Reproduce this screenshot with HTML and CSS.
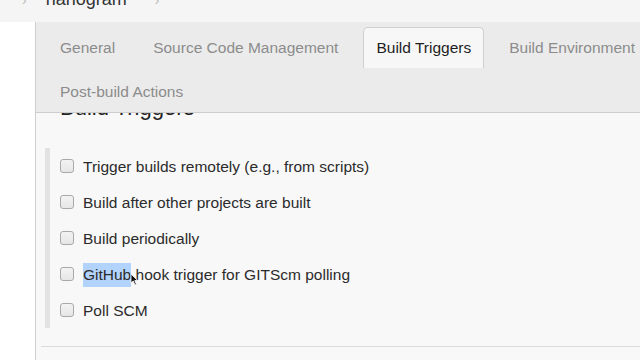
FILE: index.html
```html
<!DOCTYPE html>
<html>
<head>
<meta charset="utf-8">
<link rel="stylesheet" href="styles.css">
</head>
<body>
<div class="topbar">
  <div class="crumbs">
    <span class="chev">›</span>
    <span class="crumb">nanogram</span>
    <span class="chev">›</span>
  </div>
</div>
<div class="main">
  <div class="gutter"></div>
  <div class="panel">
    <div class="tabs">
      <div class="tabrow">
        <div class="tab">General</div>
        <div class="tab">Source Code Management</div>
        <div class="tab active">Build Triggers</div>
        <div class="tab">Build Environment</div>
      </div>
      <div class="tabrow">
        <div class="tab">Post-build Actions</div>
      </div>
    </div>
    <div class="content">
      <h2 class="heading">Build Triggers</h2>
      <div class="section">
        <label class="row"><span class="box"></span><span class="label">Trigger builds remotely (e.g., from scripts)</span></label>
        <label class="row"><span class="box"></span><span class="label">Build after other projects are built</span></label>
        <label class="row"><span class="box"></span><span class="label">Build periodically</span></label>
        <label class="row"><span class="box"></span><span class="label"><span class="sel">GitHub</span> hook trigger for GITScm polling</span>
          <svg class="cursor" width="9" height="13" viewBox="0 0 9 13"><path d="M1 1 L1 10 L3.2 8 L5 12 L6.4 11.3 L4.7 7.6 L7.6 7.4 Z" fill="#111" stroke="#fff" stroke-width="0.8"/></svg>
        </label>
        <label class="row"><span class="box"></span><span class="label">Poll SCM</span></label>
      </div>
      <div class="sep"></div>
    </div>
  </div>
</div>
</body>
</html>
```

FILE: styles.css
```css
html, body {
  margin: 0;
  padding: 0;
  background: #ffffff;
  font-family: "Liberation Sans", Arial, sans-serif;
  color: #333;
}
.topbar {
  height: 22px;
  background: #f5f5f5;
  overflow: hidden;
}
.crumbs {
  display: flex;
  align-items: baseline;
  margin-top: -12px;
  padding-left: 22px;
  font-size: 18px;
  line-height: 22px;
}
.chev {
  color: #bbb;
  font-size: 14px;
}
.crumb {
  color: #333;
  margin: 0 28px 0 19px;
}
.main {
  display: flex;
  height: 338px;
}
.gutter {
  width: 35px;
  background: #fff;
  border-right: 1px solid #cfcfcf;
}
.panel {
  flex: 1;
  min-width: 0;
  display: flex;
  flex-direction: column;
  background: #f8f8f8;
}
.tabs {
  display: flex;
  flex-direction: column;
  gap: 3px;
  padding: 5px 0 0 11px;
  background: #ebebeb;
  border-bottom: 1px solid #cdcdcd;
  height: 85px;
  overflow: hidden;
}
.tabrow {
  display: flex;
  gap: 12px;
  white-space: nowrap;
}
.tab {
  height: 41px;
  line-height: 41px;
  padding: 0 13px;
  font-size: 15.5px;
  color: #8c8c8c;
  white-space: nowrap;
  box-sizing: border-box;
  flex: none;
}
.tab.active {
  background: #f7f7f7;
  color: #1e1e1e;
  border: 1px solid #cfcfcf;
  border-bottom: none;
  border-radius: 5px 5px 0 0;
  line-height: 39px;
  padding: 0 12px;
}
.content {
  flex: 1;
  overflow: hidden;
}
.heading {
  margin: -18px 0 0 24px;
  font-size: 22px;
  line-height: 26px;
  font-weight: normal;
  color: #222;
}
.section {
  margin: 27px 0 0 9px;
  border-left: 5px solid #e2e2e2;
  display: flex;
  flex-direction: column;
}
.row {
  position: relative;
  height: 36px;
  display: flex;
  align-items: center;
  padding-left: 10px;
  font-size: 15.5px;
  color: #2b2b2b;
}
.box {
  width: 12px;
  height: 12px;
  border: 1px solid #a9a9a9;
  border-radius: 3px;
  background: linear-gradient(#f3f3f3, #e6e6e6);
  margin-right: 9px;
  flex: none;
}
.label {
  padding-top: 1px;
}
.sel {
  background: #b2d3fb;
  display: inline-block;
  line-height: 24px;
}
.cursor {
  position: absolute;
  left: 80px;
  top: 17px;
}
.sep {
  margin: 18px 0 0 5px;
  border-top: 1px solid #dcdcdc;
}
```
